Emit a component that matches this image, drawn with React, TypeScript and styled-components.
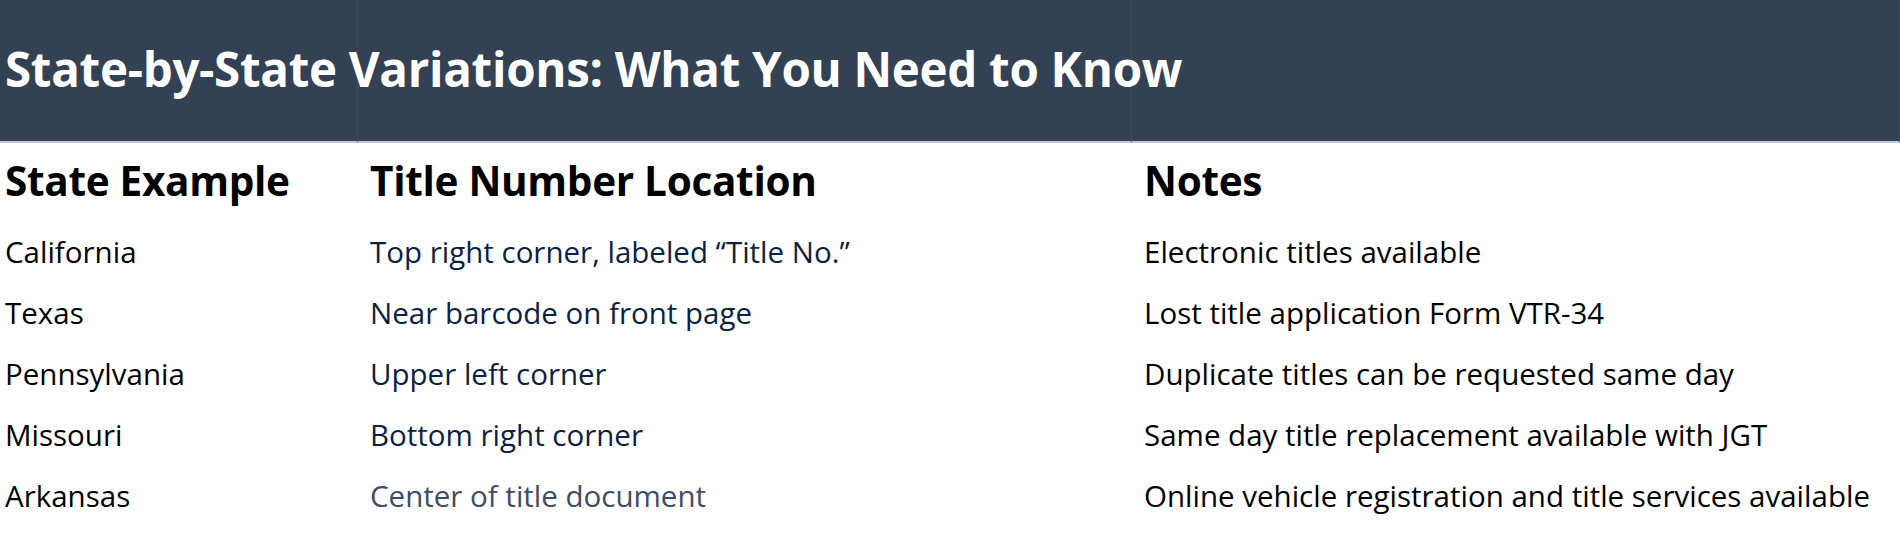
import React from "react";
import styled, { createGlobalStyle } from "styled-components";

type Row = {
    state: string;
    location: string;
    notes: string;
    muted?: boolean;
};

const rows: Row[] = [
    { state: "California", location: "Top right corner, labeled \u201CTitle No.\u201D", notes: "Electronic titles available" },
    { state: "Texas", location: "Near barcode on front page", notes: "Lost title application Form VTR-34" },
    { state: "Pennsylvania", location: "Upper left corner", notes: "Duplicate titles can be requested same day" },
    { state: "Missouri", location: "Bottom right corner", notes: "Same day title replacement available with JGT" },
    { state: "Arkansas", location: "Center of title document", notes: "Online vehicle registration and title services available", muted: true },
];

const GlobalStyle = createGlobalStyle`
    html, body {
        margin: 0;
        padding: 0;
        background: #ffffff;
    }
    body {
        font-family: "Open Sans", "Noto Sans", sans-serif;
    }
`;

const Table = styled.div`
    display: grid;
    grid-template-columns: 358px 774px 1fr;
    width: 1900px;
`;

/* the title sits in the first band cell and runs over the other two */
const BandCell = styled.div<{ $lead?: boolean }>`
    height: 143px;
    box-sizing: border-box;
    background-color: #334155;
    border-right: 1px solid #3d4b60;
    border-bottom: 2px solid #c2c6cf;
    display: flex;
    align-items: center;
    padding: 0 0 5px 5px;
    z-index: ${(p) => (p.$lead ? 1 : 0)};

    &:last-child {
        border-right: none;
    }
`;

const Title = styled.h2`
    margin: 0;
    font-size: 47.5px;
    font-weight: 700;
    color: #ffffff;
    white-space: nowrap;
    letter-spacing: -0.3px;
`;

const HeadCell = styled.div<{ $first?: boolean }>`
    padding: 16px 0 19px ${(p) => (p.$first ? "5px" : "12px")};
    font-size: 40.5px;
    line-height: 43px;
    font-weight: 700;
    color: #000000;
    letter-spacing: -0.3px;
    white-space: nowrap;
`;

const BodyCell = styled.div<{ $first?: boolean; $tone?: "plain" | "navy" | "muted" }>`
    height: 61px;
    padding-left: ${(p) => (p.$first ? "5px" : "12px")};
    font-size: 29.5px;
    line-height: 61px;
    white-space: nowrap;
    color: ${(p) => (p.$tone === "navy" ? "#0c1f45" : p.$tone === "muted" ? "#3e4c66" : "#000000")};
`;

export default function App() {
    return (
        <>
            <GlobalStyle />
            <Table>
                <BandCell $lead>
                    <Title>State-by-State Variations: What You Need to Know</Title>
                </BandCell>
                <BandCell />
                <BandCell />

                <HeadCell $first>State Example</HeadCell>
                <HeadCell>Title Number Location</HeadCell>
                <HeadCell>Notes</HeadCell>

                {rows.map((r) => (
                    <React.Fragment key={r.state}>
                        <BodyCell $first>{r.state}</BodyCell>
                        <BodyCell $tone={r.muted ? "muted" : "navy"}>{r.location}</BodyCell>
                        <BodyCell>{r.notes}</BodyCell>
                    </React.Fragment>
                ))}
            </Table>
        </>
    );
}
